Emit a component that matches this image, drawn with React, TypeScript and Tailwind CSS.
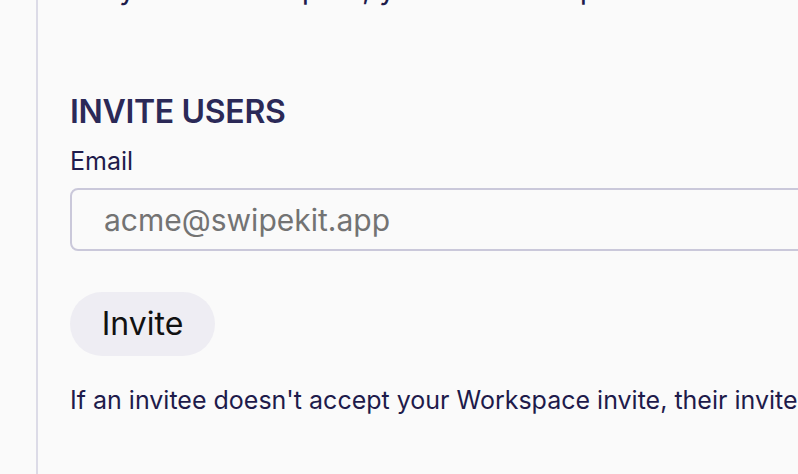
import React from 'react';

const InviteUsers = () => {
  return (
    <div className="flex flex-col pl-8">
      <p className="-mt-[30px] h-9 text-[30px] leading-9 text-[#1e1b4b] whitespace-nowrap">
        On your current plan, you can add up to 3 users.
      </p>

      <h2 className="mt-[86px] text-[32px] leading-10 font-semibold tracking-[-0.01em] text-[#2b2957] whitespace-nowrap">
        INVITE USERS
      </h2>

      <label htmlFor="invite-email" className="mt-[13px] text-[25px] leading-8 text-[#1e1b4b]">
        Email
      </label>

      <input
        id="invite-email"
        type="email"
        placeholder="acme@swipekit.app"
        className="mt-[11px] h-[63px] w-[900px] rounded-lg border-2 border-[#cac8da] bg-[#fafafa] pl-8 text-[30px] text-[#1e1b4b] placeholder:text-[#737373] outline-none"
      />

      <button
        type="button"
        className="mt-[41px] flex h-16 w-[145px] items-center justify-center rounded-full bg-[#eeedf3] text-[32px] text-[#111111]"
      >
        Invite
      </button>

      <p className="mt-[26px] text-[25px] leading-[37.5px] text-[#1e1b4b] whitespace-nowrap">
        If an invitee doesn't accept your Workspace invite, their invite will expire after 7 days.
      </p>
    </div>
  );
};

export default function App() {
  return (
    <div
      className="flex h-[474px] w-[798px] overflow-hidden bg-[#fafafa]"
      style={{ fontFamily: 'Inter, "Noto Sans", sans-serif' }}
    >
      <div className="w-9 shrink-0" />
      <div className="flex-1 border-l-2 border-[#dcdbe7]">
        <InviteUsers />
      </div>
    </div>
  );
}
